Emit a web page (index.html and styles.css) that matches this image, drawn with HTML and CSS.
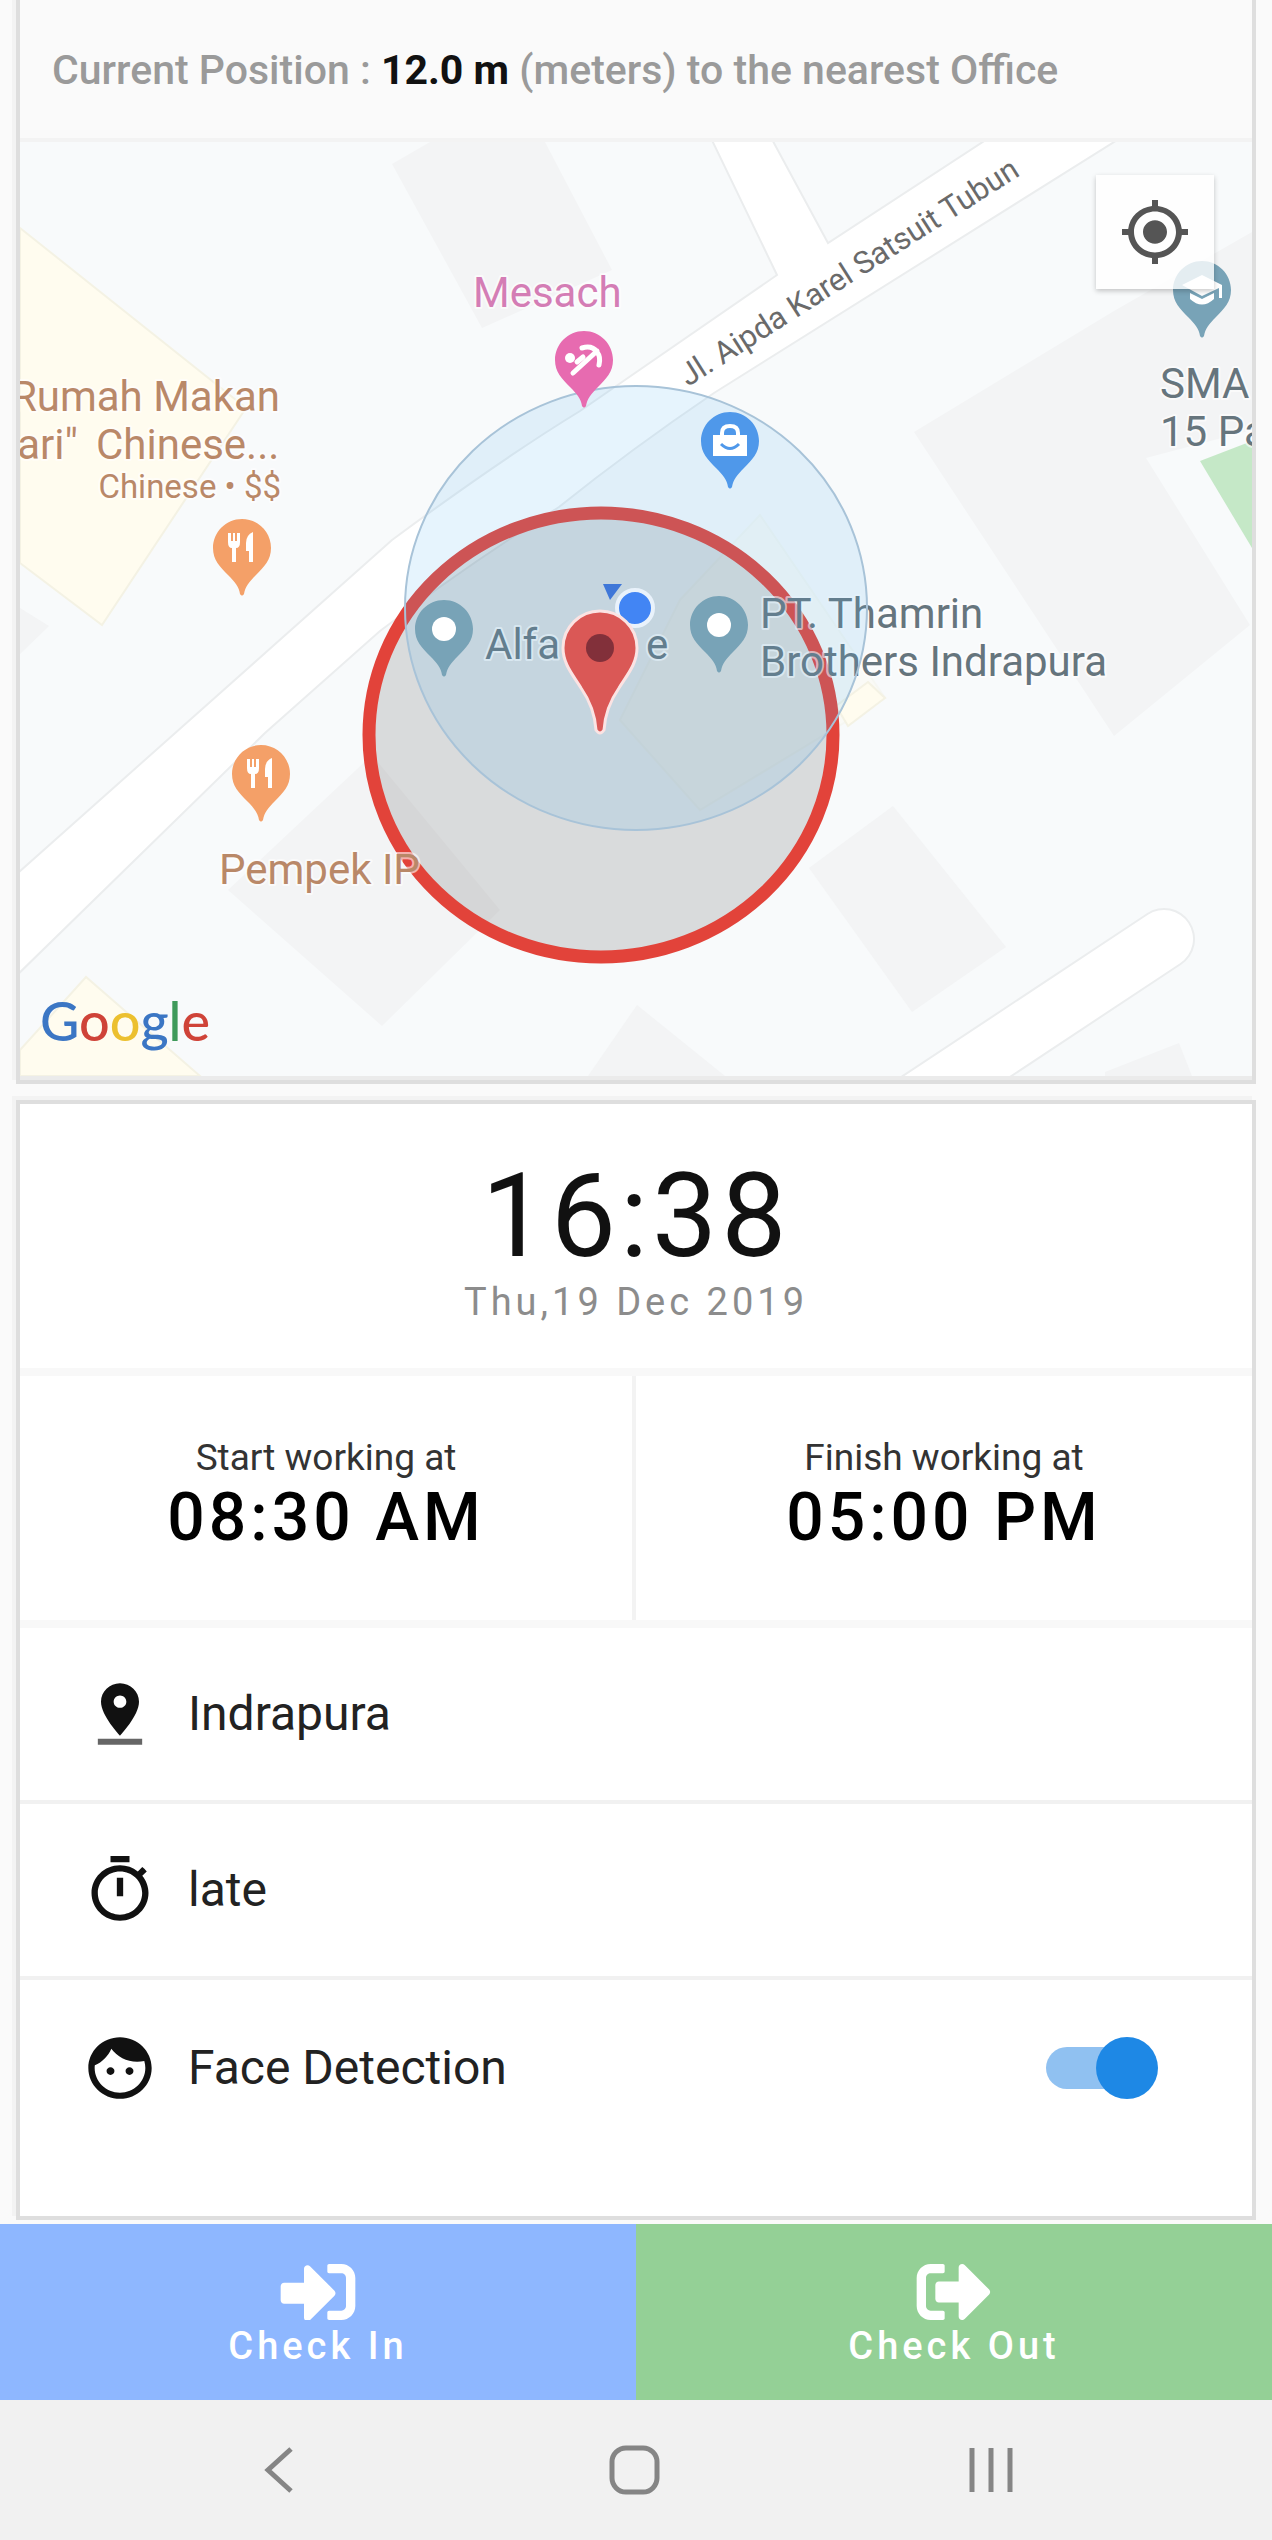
FILE: index.html
```html
<!DOCTYPE html>
<html lang="en">
<head>
<meta charset="utf-8">
<meta name="viewport" content="width=device-width, initial-scale=1">
<title>Attendance</title>
<link rel="stylesheet" href="styles.css">
</head>
<body>
<main class="page">
  <section class="card card-map">
    <p class="position">Current Position : <strong>12.0 m</strong> (meters) to the nearest Office</p>
    <div class="map">
      <svg class="map-canvas" viewBox="20 142 1232 934" role="img" aria-label="Map of the office area">
        <defs>
          <path id="pin" d="M0 -29C-16 -29 -29 -16 -29 0C-29 12 -22 19 -14 27C-7 34 -3 39 -2 46Q0 49 2 46C3 39 7 34 14 27C22 19 29 12 29 0C29 -16 16 -29 0 -29Z"/>
          <g id="fork">
            <path d="M-14 -15v9q0 6 4 6v14h4V0q4 0 4 -6v-9h-3v8h-2v-8h-2v8h-2v-8z"/>
            <path d="M11 -16q-7 3 -7 11v8h3v11h4z"/>
          </g>
        </defs>
        <rect class="land" x="20" y="142" width="1232" height="934"/>
        <g class="shop">
          <path d="M20 228L246 408L102 625L20 563Z"/>
          <path d="M20 1050L86 977L200 1076H20Z"/>
          <path class="faint" d="M680 600L760 515L885 698L700 810L620 720Z"/>
          <path d="M868 682L885 698L848 726L836 706Z"/>
        </g>
        <g class="building">
          <path d="M392 164L430 142H545L612 270L482 328Z"/>
          <path d="M914 432L1114 311L1252 232V430L1146 458L1250 625L1114 736Z"/>
          <path d="M809 868L893 806L1006 947L912 1012Z"/>
          <path d="M588 1076L637 1005L725 1076Z"/>
          <path d="M1105 1072L1179 1043L1192 1076H1105Z"/>
          <path d="M228 890L372 755L500 910L382 1026Z"/>
          <path d="M20 608L49 626L20 654Z"/>
        </g>
        <path class="park" d="M1200 461L1252 441V548Z"/>
        <path class="road" d="M10 880L392 540Q500 460 580 411L777 275L708 132H768L828 243L998 132H1130L714 393Q630 450 559 507Q460 570 380 631L265 733L10 982Z"/>
        <path class="road-edge" d="M880 1127L1164 939"/>
        <path class="road-core" d="M880 1127L1164 939"/>

        <text class="street" transform="translate(688 387) rotate(-32.5)">Jl. Aipda Karel Satsuit Tubun</text>
        <g class="label food">
          <text x="280" y="411" text-anchor="end">Rumah Makan</text>
          <text x="78" y="459" text-anchor="end">ari"</text>
          <text x="96" y="459">Chinese...</text>
          <text class="small" x="281" y="498" text-anchor="end">Chinese • $$</text>
        </g>
        <g class="label place">
          <text x="1160" y="398">SMA</text>
          <text x="1160" y="446">15 Pa</text>
        </g>

        <ellipse class="office-zone" cx="601" cy="735" rx="232" ry="222"/>
        <text class="label food" x="219" y="884">Pempek IP</text>
        <g class="label place">
          <text x="760" y="628">PT. Thamrin</text>
          <text x="760" y="676">Brothers Indrapura</text>
          <text x="485" y="659">Alfa</text>
          <text x="646" y="659">e</text>
        </g>
        <ellipse class="accuracy" cx="636" cy="608" rx="231" ry="222"/>

        <text class="label shopname" x="473" y="307">Mesach</text>
        <g transform="translate(584 360)">
          <use href="#pin" fill="#e76bb0"/>
          <circle cx="-14" cy="-2" r="5" fill="#fff"/>
          <path d="M-11 13L13 -9M-7 2L-1 -3M-2 -12Q8 -15 13 -8Q17 -3 15 5" fill="none" stroke="#fff" stroke-width="5" stroke-linecap="round"/>
        </g>
        <g transform="translate(242 548)"><use href="#pin" fill="#f4a068"/><use href="#fork" fill="#fff"/></g>
        <g transform="translate(261 774)"><use href="#pin" fill="#f4a068"/><use href="#fork" fill="#fff"/></g>
        <g transform="translate(730 441)">
          <use href="#pin" fill="#4f98ea"/>
          <path d="M-17 -6H17V15H-17Z" fill="#fff"/>
          <path d="M-8 -6V-8Q-8 -15 0 -15T8 -8V-6" fill="none" stroke="#fff" stroke-width="4"/>
          <path d="M-9 3Q0 12 9 3" fill="none" stroke="#4f98ea" stroke-width="3"/>
        </g>
        <g transform="translate(444 629)"><use href="#pin" fill="#78a3b7"/><circle r="12" fill="#fff"/></g>
        <g transform="translate(719 625)"><use href="#pin" fill="#78a3b7"/><circle r="12" fill="#fff"/></g>
        <g transform="translate(1202 290)">
          <use href="#pin" fill="#78a3b7"/>
          <path d="M-20 -5L0 -15L20 -5V8H17V-2L0 6Z" fill="#fff"/>
          <path d="M-12 3L0 9L12 3V9Q0 20 -12 9Z" fill="#fff"/>
        </g>

        <path d="M603 584H622L610 600Z" fill="#3f77d8"/>
        <circle cx="635" cy="608" r="18" fill="#4285f4" stroke="#e9f2fb" stroke-width="4"/>
        <path class="marker" d="M600 611C580 611 563 627 563 648C563 664 573 675 581 688C590 701 595 714 596 730Q600 736 604 730C605 714 610 701 619 688C627 675 637 664 637 648C637 627 620 611 600 611Z"/>
        <circle cx="600" cy="648" r="14" fill="#82303a"/>

        <text class="google" x="40" y="1041"><tspan fill="#3b76c4">G</tspan><tspan fill="#cf4338">o</tspan><tspan fill="#ecc02f">o</tspan><tspan fill="#3b76c4">g</tspan><tspan fill="#3f9a5b">l</tspan><tspan fill="#cf4338">e</tspan></text>
      </svg>
      <button class="locate" type="button" aria-label="My location">
        <svg class="locate-icon" viewBox="0 0 24 24" preserveAspectRatio="none"><path d="M12 8c-2.210 0-4 1.790-4 4s1.790 4 4 4 4-1.790 4-4-1.790-4-4-4zm8.940 3c-.46-4.170-3.770-7.480-7.940-7.940V1h-2v2.060C6.830 3.520 3.520 6.830 3.060 11H1v2h2.060c.46 4.170 3.770 7.480 7.940 7.940V23h2v-2.060c4.170-.46 7.480-3.770 7.940-7.940H23v-2h-2.060zM12 19c-3.870 0-7-3.130-7-7s3.130-7 7-7 7 3.130 7 7-3.130 7-7 7z"/></svg>
      </button>
    </div>
  </section>

  <section class="card card-info">
    <header class="now">
      <time class="clock" datetime="2019-12-19T16:38">16:38</time>
      <span class="date">Thu,19 Dec 2019</span>
    </header>
    <div class="hours">
      <div class="hours-cell">
        <span class="hours-label">Start working at</span>
        <span class="hours-time">08:30 AM</span>
      </div>
      <div class="hours-cell">
        <span class="hours-label">Finish working at</span>
        <span class="hours-time">05:00 PM</span>
      </div>
    </div>
    <div class="row">
      <svg class="row-icon" viewBox="0 0 24 24" preserveAspectRatio="none" aria-hidden="true"><path d="M18 8c0-3.310-2.690-6-6-6S6 4.690 6 8c0 4.500 6 11 6 11s6-6.500 6-11zm-8 0c0-1.100.9-2 2-2s2 .9 2 2-.89 2-2 2c-1.100 0-2-.9-2-2z"/><path fill="#666" d="M5 20v2h14v-2H5z"/></svg>
      <span>Indrapura</span>
    </div>
    <div class="row">
      <svg class="row-icon" viewBox="0 0 24 24" preserveAspectRatio="none" aria-hidden="true"><path d="M15 1H9v2h6V1zm-4 13h2V8h-2v6zm8.030-6.610l1.420-1.420c-.43-.51-.9-.99-1.410-1.410l-1.420 1.420C16.070 4.740 14.120 4 12 4c-4.970 0-9 4.030-9 9s4.020 9 9 9 9-4.030 9-9c0-2.120-.74-4.070-1.970-5.610zM12 20c-3.870 0-7-3.130-7-7s3.130-7 7-7 7 3.130 7 7-3.130 7-7 7z"/></svg>
      <span>late</span>
    </div>
    <label class="row" for="face-detection">
      <svg class="row-icon" viewBox="0 0 24 24" preserveAspectRatio="none" aria-hidden="true"><path d="M9 11.750c-.69 0-1.250.56-1.250 1.250s.56 1.250 1.250 1.250 1.250-.56 1.250-1.250-.56-1.250-1.250-1.250zm6 0c-.69 0-1.250.56-1.250 1.250s.56 1.250 1.250 1.250 1.250-.56 1.250-1.250-.56-1.250-1.250-1.250zM12 2C6.480 2 2 6.480 2 12s4.480 10 10 10 10-4.480 10-10S17.520 2 12 2zm0 18c-4.410 0-8-3.590-8-8 0-.29.02-.58.05-.86 2.360-1.050 4.230-2.980 5.210-5.370C11.070 8.330 14.050 10 17.420 10c.78 0 1.530-.09 2.250-.26.21.71.33 1.470.33 2.260 0 4.410-3.590 8-8 8z"/></svg>
      <span>Face Detection</span>
      <input class="switch" id="face-detection" type="checkbox" checked>
    </label>
  </section>
</main>

<div class="actions">
  <button class="action action-in" type="button">
    <svg class="action-icon" viewBox="0 64 512 384" aria-hidden="true"><path d="M416 448h-84c-6.600 0-12-5.400-12-12v-40c0-6.600 5.400-12 12-12h84c17.700 0 32-14.300 32-32V160c0-17.700-14.300-32-32-32h-84c-6.600 0-12-5.400-12-12V76c0-6.600 5.400-12 12-12h84c53 0 96 43 96 96v192c0 53-43 96-96 96zm-47-201L201 79c-15-15-41-4.500-41 17v96H24c-13.300 0-24 10.700-24 24v96c0 13.300 10.700 24 24 24h136v96c0 21.500 26 32 41 17l168-168c9.300-9.400 9.300-24.600 0-34z"/></svg>
    <span>Check In</span>
  </button>
  <button class="action action-out" type="button">
    <svg class="action-icon" viewBox="0 64 512 384" aria-hidden="true"><path d="M497 273L329 441c-15 15-41 4.500-41-17v-96H152c-13.300 0-24-10.700-24-24v-96c0-13.300 10.700-24 24-24h136V88c0-21.400 25.900-32 41-17l168 168c9.300 9.400 9.300 24.600 0 34zM192 436v-40c0-6.600-5.400-12-12-12H96c-17.700 0-32-14.300-32-32V160c0-17.700 14.300-32 32-32h84c6.600 0 12-5.400 12-12V76c0-6.600-5.400-12-12-12H96c-53 0-96 43-96 96v192c0 53 43 96 96 96h84c6.600 0 12-5.400 12-12z"/></svg>
    <span>Check Out</span>
  </button>
</div>

<nav class="system" aria-label="System navigation">
  <button class="system-key" type="button" aria-label="Back"><svg class="system-icon" viewBox="0 0 60 60"><path d="M41 9L18 30L41 51"/></svg></button>
  <button class="system-key" type="button" aria-label="Home"><svg class="system-icon" viewBox="0 0 60 60"><rect x="6" y="8" width="45" height="44" rx="14"/></svg></button>
  <button class="system-key" type="button" aria-label="Recent apps"><svg class="system-icon" viewBox="0 0 60 60"><path d="M10 8V52M29 8V52M48 8V52"/></svg></button>
</nav>
</body>
</html>
```
FILE: styles.css
```css
* {
  box-sizing: border-box;
}

body {
  margin: 0;
  background: #fafafa;
  color: #111;
  font-family: Roboto, "Liberation Sans", sans-serif;
  font-size: 38px;
  line-height: 48px;
}

button {
  margin: 0;
  padding: 0;
  border: 0;
  font: inherit;
  color: inherit;
}

.page {
  display: flex;
  flex-direction: column;
  gap: 16px;
  padding: 0 16px 4px;
}

.card {
  border: 4px solid #dedede;
  background: #fff;
  box-shadow: -4px -4px 0 #f3f3f3;
}

.card-map {
  border-top: 0;
  background: #fafafa;
}

.position {
  margin: 0;
  padding: 46px 32px 44px;
  border-bottom: 4px solid #f3f3f3;
  color: #9a9a9a;
  font-size: 41px;
  font-weight: 500;
}

.position strong {
  color: #111;
  font-weight: 700;
}

/* Map */
.map {
  position: relative;
  border-bottom: 4px solid #ebebeb;
}

.map-canvas {
  display: block;
  width: 100%;
  height: auto;
}

.land { fill: #f8fafb; }
.shop { fill: #fffcef; stroke: #f4f2e4; stroke-width: 2; }
.faint { opacity: 0.35; }
.building { fill: #f3f4f5; }
.park { fill: #c5e8c7; }
.road { fill: #fff; stroke: #ebedee; stroke-width: 2; }
.road-edge { stroke: #ebedee; stroke-width: 62; stroke-linecap: round; }
.road-core { stroke: #fff; stroke-width: 58; stroke-linecap: round; }

.label {
  font-size: 42px;
  stroke: #fff;
  stroke-opacity: 0.6;
  stroke-width: 4px;
  stroke-linejoin: round;
  paint-order: stroke;
}

.small { font-size: 33px; }
.food { fill: #b98868; }
.place { fill: #66757d; }
.shopname { fill: #d47db5; }
.street { font-size: 31px; fill: #6a6a6a; }
.google { font-family: Lato, sans-serif; font-size: 54px; font-weight: 500; }

.office-zone {
  fill: rgba(0, 0, 0, 0.12);
  stroke: #e2433a;
  stroke-width: 13;
}

.accuracy {
  fill: rgba(90, 180, 240, 0.15);
  stroke: #a8c3d8;
  stroke-width: 2;
}

.marker {
  fill: #da5856;
  stroke: #fbe3e3;
  stroke-width: 3;
}

.locate {
  position: absolute;
  top: 33px;
  right: 38px;
  display: grid;
  place-items: center;
  width: 118px;
  height: 114px;
  background: rgba(255, 255, 255, 0.8);
  box-shadow: 0 2px 5px rgba(0, 0, 0, 0.22);
}

.locate-icon {
  width: 72px;
  height: 70px;
  fill: #555;
}

/* Clock */
.now {
  display: flex;
  flex-direction: column;
  align-items: center;
  gap: 4px;
  padding: 54px 0 42px;
  border-bottom: 8px solid #f8f8f8;
}

.clock {
  font-size: 116px;
  line-height: 116px;
  letter-spacing: 4px;
}

.date {
  color: #8c8c8c;
  letter-spacing: 4px;
}

/* Working hours */
.hours {
  display: grid;
  grid-template-columns: 1fr 1fr;
  border-bottom: 8px solid #f8f8f8;
}

.hours-cell {
  display: flex;
  flex-direction: column;
  align-items: center;
  padding: 58px 0 66px;
}

.hours-cell:first-child {
  border-right: 4px solid #f3f3f3;
}

.hours-label {
  color: #333;
  font-size: 37px;
}

.hours-time {
  color: #000;
  font-size: 66px;
  font-weight: 500;
  line-height: 72px;
  letter-spacing: 4px;
}

/* Detail rows */
.row {
  display: flex;
  align-items: center;
  gap: 30px;
  min-height: 176px;
  padding: 0 94px 0 62px;
  border-bottom: 4px solid #f1f1f1;
  color: #222;
  font-size: 48px;
}

.row:last-child {
  border-bottom: 0;
  margin-bottom: 60px;
}

.row-icon {
  flex: none;
  width: 76px;
  height: 74px;
  fill: #111;
}

.switch {
  appearance: none;
  position: relative;
  width: 112px;
  height: 62px;
  margin: 0 0 0 auto;
}

.switch::before {
  content: "";
  position: absolute;
  inset: 10px 8px 10px 0;
  border-radius: 21px;
  background: #90c1f1;
}

.switch::after {
  content: "";
  position: absolute;
  top: 0;
  right: 0;
  width: 62px;
  height: 62px;
  border-radius: 50%;
  background: #1e88e5;
}

.switch:not(:checked)::after {
  right: auto;
  left: 0;
  background: #f1f1f1;
}

/* Check in and check out */
.actions {
  display: grid;
  grid-template-columns: 1fr 1fr;
}

.action {
  display: flex;
  flex-direction: column;
  align-items: center;
  gap: 2px;
  padding: 40px 0 30px;
  color: #fff;
  font-weight: 500;
  letter-spacing: 4px;
}

.action-in { background: #8eb7ff; }
.action-out { background: #94d096; }

.action-icon {
  width: 76px;
  height: 56px;
  fill: #fff;
}

/* System bar */
.system {
  display: grid;
  grid-template-columns: repeat(3, 28%);
  justify-content: center;
  background: #f1f1f1;
}

.system-key {
  display: grid;
  place-items: center;
  height: 140px;
  background: none;
}

.system-icon {
  width: 60px;
  height: 60px;
  fill: none;
  stroke: #858585;
  stroke-width: 5;
}
```
